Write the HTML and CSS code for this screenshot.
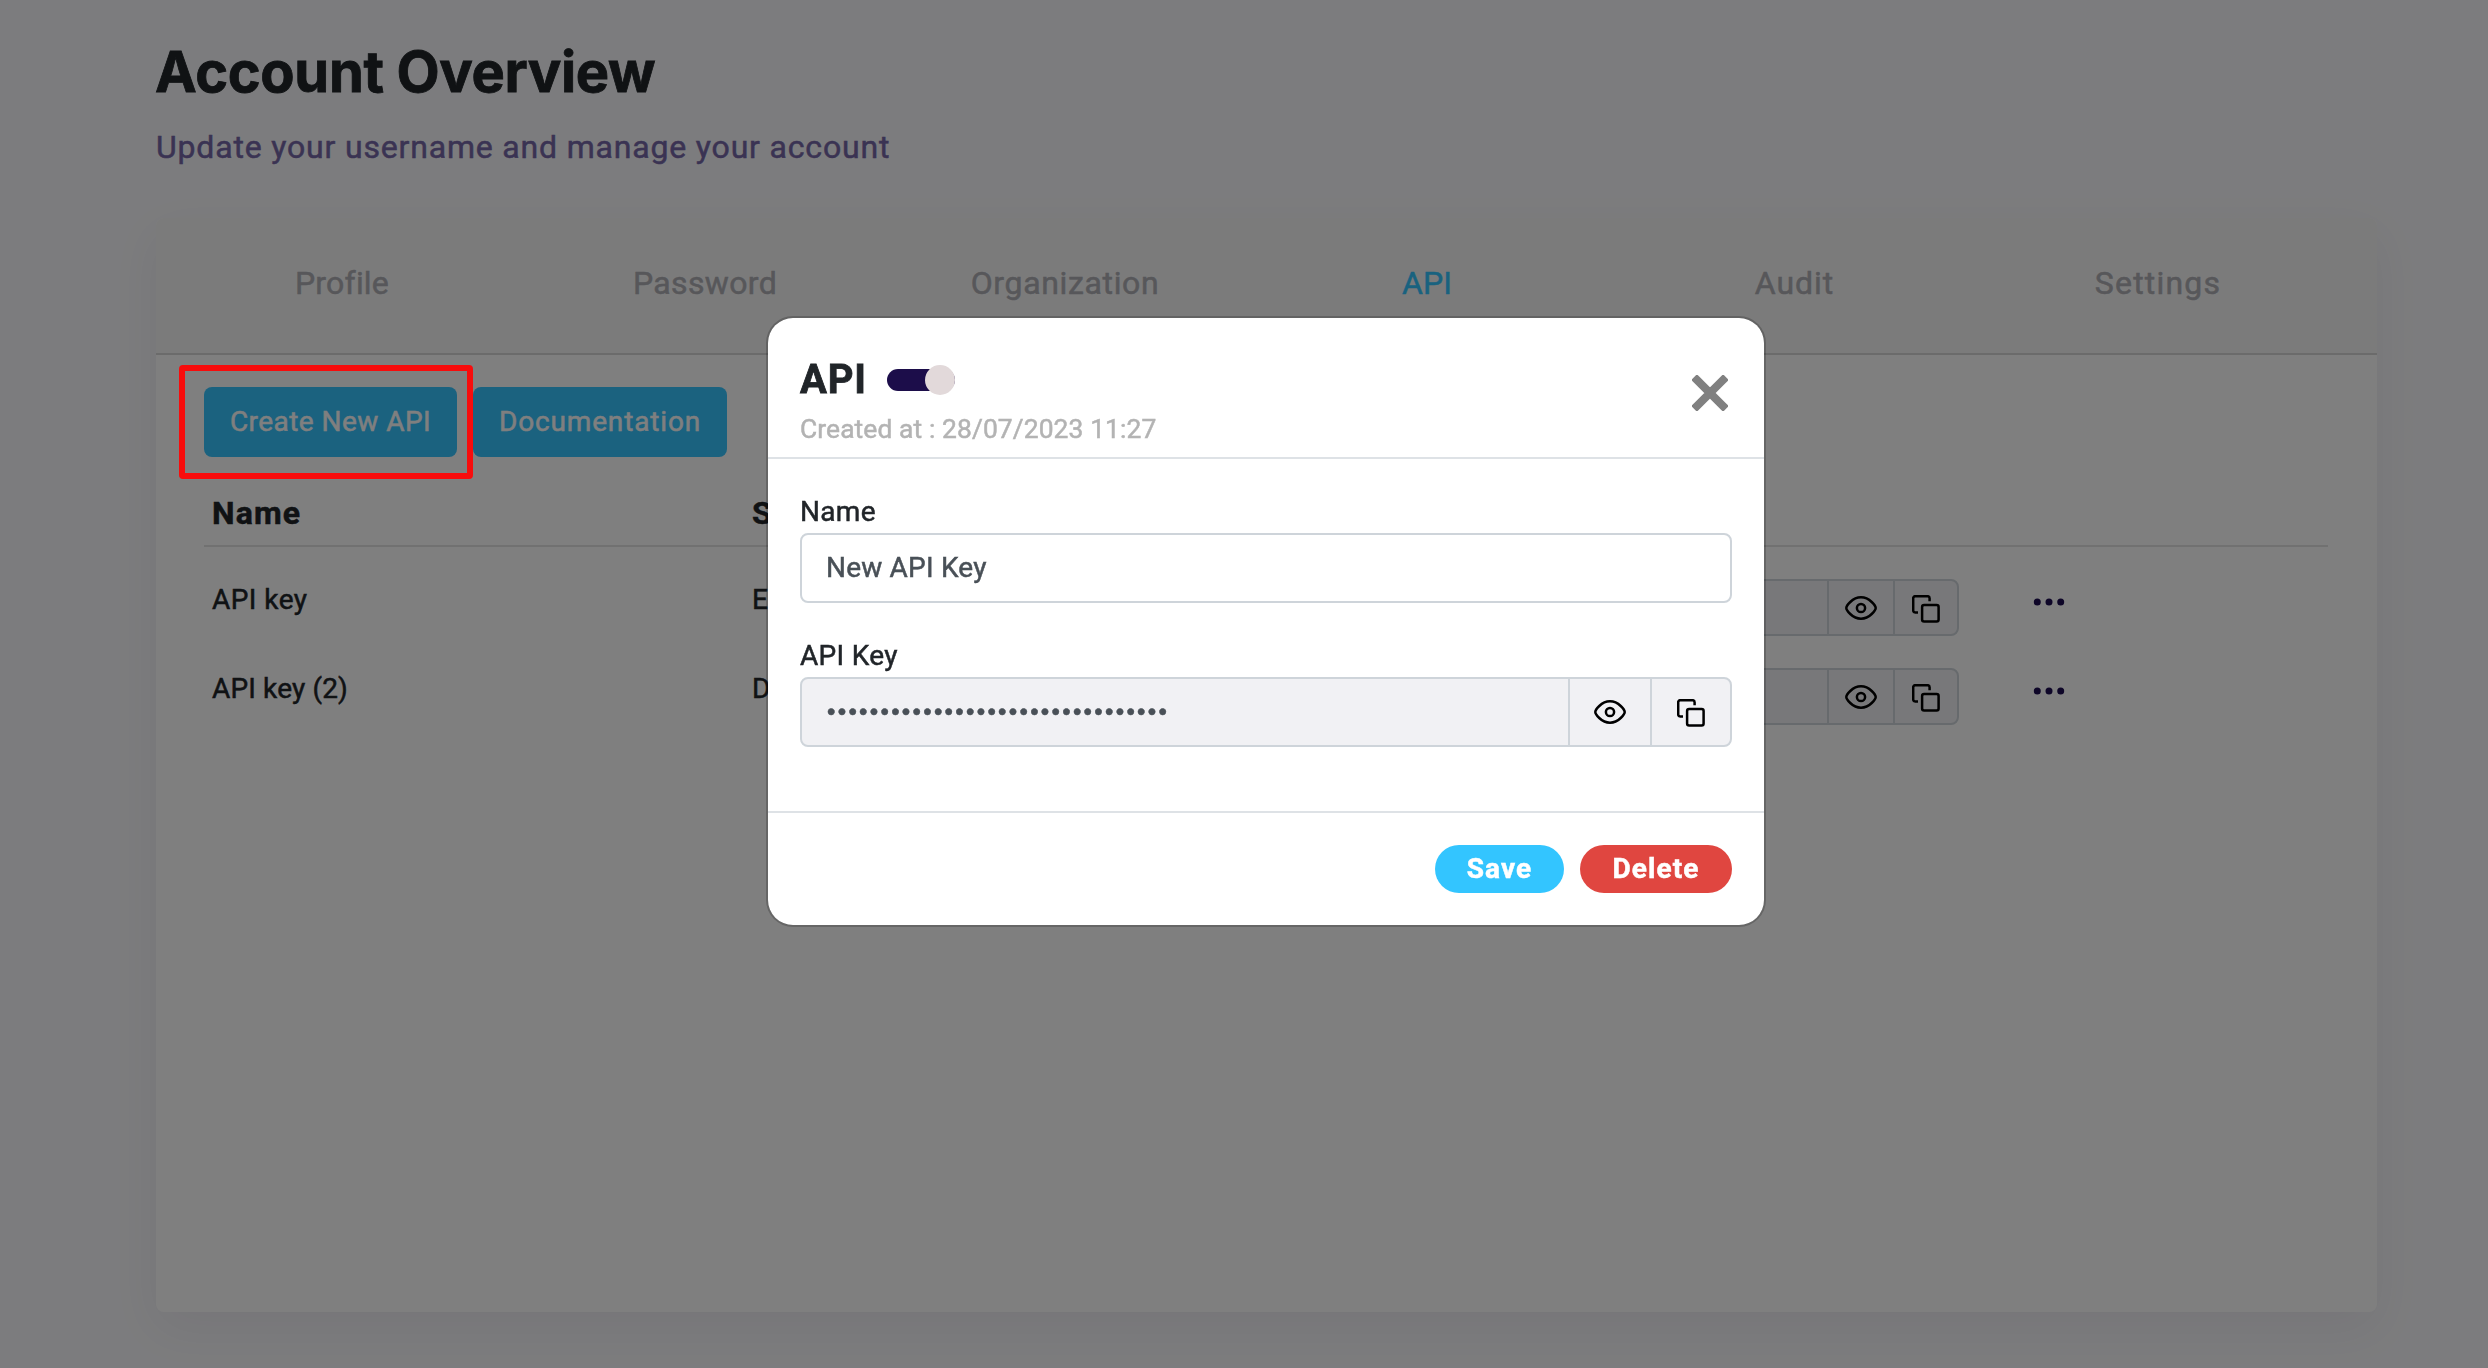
FILE: index.html
```html
<!DOCTYPE html>
<html lang="en">
<head>
<meta charset="utf-8">
<title>Account Overview</title>
<link rel="stylesheet" href="styles.css">
</head>
<body>
<svg class="sprite" aria-hidden="true">
  <symbol id="eye" viewBox="0 0 32 24">
    <path d="M1.3 12C1.3 10.2 7 1.3 16 1.3S30.7 10.2 30.7 12 25 22.7 16 22.7 1.3 13.8 1.3 12Z"/>
    <circle cx="16" cy="12" r="4.1"/>
  </symbol>
  <symbol id="copy" viewBox="0 0 28 28">
    <path d="M17.6 6.2V3.2a2 2 0 0 0-2-2H3.2a2 2 0 0 0-2 2v12.4a2 2 0 0 0 2 2H6"/>
    <rect x="10.1" y="10.1" width="16.5" height="16.5" rx="2"/>
  </symbol>
  <symbol id="more" viewBox="0 0 32 8">
    <circle cx="4.3" cy="4" r="3.5"/><circle cx="16" cy="4" r="3.5"/><circle cx="27.7" cy="4" r="3.5"/>
  </symbol>
</svg>

<main class="page">
  <h1 class="title">Account Overview</h1>
  <p class="subtitle">Update your username and manage your account</p>

  <section class="card">
    <nav class="tabs">
      <a class="tab profile">Profile</a>
      <a class="tab password">Password</a>
      <a class="tab organization">Organization</a>
      <a class="tab api active">API</a>
      <a class="tab audit">Audit</a>
      <a class="tab settings">Settings</a>
    </nav>
    <div class="card-body">
      <div class="actions">
        <button class="btn create">Create New API</button>
        <button class="btn docs">Documentation</button>
      </div>
      <div class="table">
        <div class="row head">
          <div class="cell">Name</div><div class="cell">Status</div><div class="cell"></div><div class="cell"></div>
        </div>
        <div class="row">
          <div class="cell">API key</div>
          <div class="cell">Enabled</div>
          <div class="key small">
            <span class="key-value"></span>
            <span class="key-btn"><svg class="icon eye"><use href="#eye"/></svg></span>
            <span class="key-btn last"><svg class="icon copy"><use href="#copy"/></svg></span>
          </div>
          <div class="more"><svg class="dots"><use href="#more"/></svg></div>
        </div>
        <div class="row">
          <div class="cell tight">API key (2)</div>
          <div class="cell">Disabled</div>
          <div class="key small">
            <span class="key-value"></span>
            <span class="key-btn"><svg class="icon eye"><use href="#eye"/></svg></span>
            <span class="key-btn last"><svg class="icon copy"><use href="#copy"/></svg></span>
          </div>
          <div class="more"><svg class="dots"><use href="#more"/></svg></div>
        </div>
      </div>
    </div>
  </section>
</main>

<div class="overlay">
  <div class="modal">
    <header class="modal-header">
      <div>
        <div class="modal-title"><span class="api-title">API</span><span class="toggle"><span class="knob"></span></span></div>
        <div class="created">Created at : 28/07/2023 11:27</div>
      </div>
      <svg class="close" viewBox="0 0 36 36"><path d="M4.9 4.9 31.1 31.1M31.1 4.9 4.9 31.1"/></svg>
    </header>
    <div class="modal-body">
      <div class="label">Name</div>
      <div class="input">New API Key</div>
      <div class="label second-label">API Key</div>
      <div class="key">
        <span class="key-value">••••••••••••••••••••••••••••••••</span>
        <span class="key-btn"><svg class="icon eye"><use href="#eye"/></svg></span>
        <span class="key-btn last"><svg class="icon copy"><use href="#copy"/></svg></span>
      </div>
    </div>
    <footer class="modal-footer">
      <button class="pill save">Save</button>
      <button class="pill delete">Delete</button>
    </footer>
  </div>
</div>
<div class="highlight"></div>
</body>
</html>
```
FILE: styles.css
```css
* { box-sizing: border-box; }
body {
  margin: 0;
  height: 1368px;
  overflow: hidden;
  background: #f9f9fc;
  color: #212529;
  font: 400 28px/40px Roboto, "Liberation Sans", sans-serif;
  -webkit-text-stroke: .5px currentColor;
}
button { border: 0; font: inherit; padding: 0; }
.sprite { position: absolute; width: 0; height: 0; }

.page { padding: 40px 111px 0 156px; }
.title { margin: 0 0 0 -1px; font: 700 56px/64px Inter, sans-serif; letter-spacing: -0.35px; -webkit-text-stroke-width: .8px; }
.subtitle { margin: 19px 0 47px; font-size: 32px; line-height: 48px; letter-spacing: .82px; color: #7566a6; }

.card {
  height: 1094px;
  border-radius: 8px;
  background: #fff;
  box-shadow: 0 16px 50px rgba(30, 20, 60, .06);
}
.tabs {
  display: grid;
  grid-template-columns: 372px 354px 366px 358px 377px 350px;
  align-items: center;
  height: 137px;
  padding-bottom: 5px;
  border-bottom: 2px solid #d7d7d7;
  border-radius: 8px 8px 0 0;
  background: #f7f7f7;
}
.tab { text-align: center; font-size: 32px; line-height: 48px; color: #aeaeb4; }
.profile { letter-spacing: .2px; }
.password { letter-spacing: .35px; }
.organization { letter-spacing: .65px; }
.audit { letter-spacing: 1px; }
.settings { letter-spacing: 1.2px; }
.active { color: #33c5ff; }

.card-body { padding: 32px 49px 0 48px; }
.actions { display: flex; gap: 16px; margin-bottom: 32px; }
.btn { height: 70px; border-radius: 8px; background: #36c4ff; color: #fff; }
.create { width: 253px; letter-spacing: .45px; }
.docs { width: 254px; letter-spacing: .85px; }

.row { display: grid; grid-template-columns: 540px 556px 668px 1fr; padding-top: 32px; height: 89px; }
.cell { padding: 1px 0 0 8px; letter-spacing: .45px; }
.tight { letter-spacing: .15px; }
.head {
  height: 58px;
  padding: 0;
  border-bottom: 2px solid #e2e2e2;
  font-size: 32px;
  font-weight: 700;
  line-height: 48px;
}
.head .cell { padding-top: 0; letter-spacing: 1.1px; }
.more { padding: 18px 0 0 65px; line-height: 0; }
.dots { width: 32px; height: 8px; fill: #1c0d50; }

.key { display: flex; height: 70px; border: 2px solid #ced4da; border-radius: 8px; background: #f1f1f4; }
.key-value {
  flex: 1;
  padding-left: 25px;
  color: #495057;
  font: 24px/66px "Liberation Sans", sans-serif;
  letter-spacing: 2.29px;
}
.key-btn { display: flex; align-items: center; justify-content: center; width: 82px; border-left: 2px solid #ced4da; }
.key-btn.last { width: 80px; }
.key.small { width: 659px; height: 57px; }
.small .key-btn { width: 66px; }
.small .key-btn.last { width: 64px; }
.icon { fill: none; stroke: #000; stroke-width: 2.5; }
.eye { width: 32px; height: 24px; }
.copy { width: 28px; height: 28px; margin-top: 2px; }

.overlay {
  position: fixed;
  inset: 0;
  display: flex;
  justify-content: center;
  align-items: flex-start;
  padding: 316px 0 0 44px;
  background: rgba(0, 0, 0, .5);
}
.modal {
  width: 1000px;
  border: 2px solid rgba(0, 0, 0, .2);
  border-radius: 27px;
  background: #fff;
  background-clip: padding-box;
}
.modal-header {
  display: flex;
  justify-content: space-between;
  height: 141px;
  padding: 38px 36px 0 32px;
  border-bottom: 2px solid #dee2e6;
}
.modal-title { display: flex; align-items: center; gap: 20px; height: 48px; }
.api-title { width: 67px; font-size: 40px; font-weight: 700; line-height: 48px; letter-spacing: .8px; -webkit-text-stroke-width: .8px; }
.toggle {
  display: flex;
  align-items: center;
  justify-content: flex-end;
  width: 68px;
  height: 22px;
  border-radius: 11px;
  background: #1c0d4a;
}
.knob { width: 30px; height: 30px; border-radius: 50%; background: #e2d9da; }
.created { margin-top: 5px; font-size: 26.4px; color: #b3b3b3; letter-spacing: .1px; }
.close { width: 36px; height: 36px; margin-top: 19px; stroke: #808080; stroke-width: 8; stroke-linecap: square; stroke-linejoin: round; }

.modal-body { height: 352px; padding: 33px 32px 0; }
.label { margin-bottom: 1px; letter-spacing: .3px; }
.second-label { margin-top: 33px; }
.input {
  height: 70px;
  padding-left: 24px;
  border: 2px solid #ced4da;
  border-radius: 8px;
  line-height: 66px;
  letter-spacing: .2px;
  color: #495057;
}

.modal-footer { display: flex; justify-content: flex-end; gap: 16px; height: 114px; padding: 32px; border-top: 2px solid #dee2e6; }
.pill { height: 48px; border-radius: 24px; color: #fff; font-weight: 700; letter-spacing: 1.1px; }
.save { width: 129px; background: #33c5ff; }
.delete { width: 152px; background: #e04640; }

/* callout drawn over the dimmed page */
.highlight {
  position: absolute;
  left: 179px;
  top: 365px;
  width: 294px;
  height: 114px;
  border: 6px solid #f80c0c;
  border-radius: 4px;
}
```
